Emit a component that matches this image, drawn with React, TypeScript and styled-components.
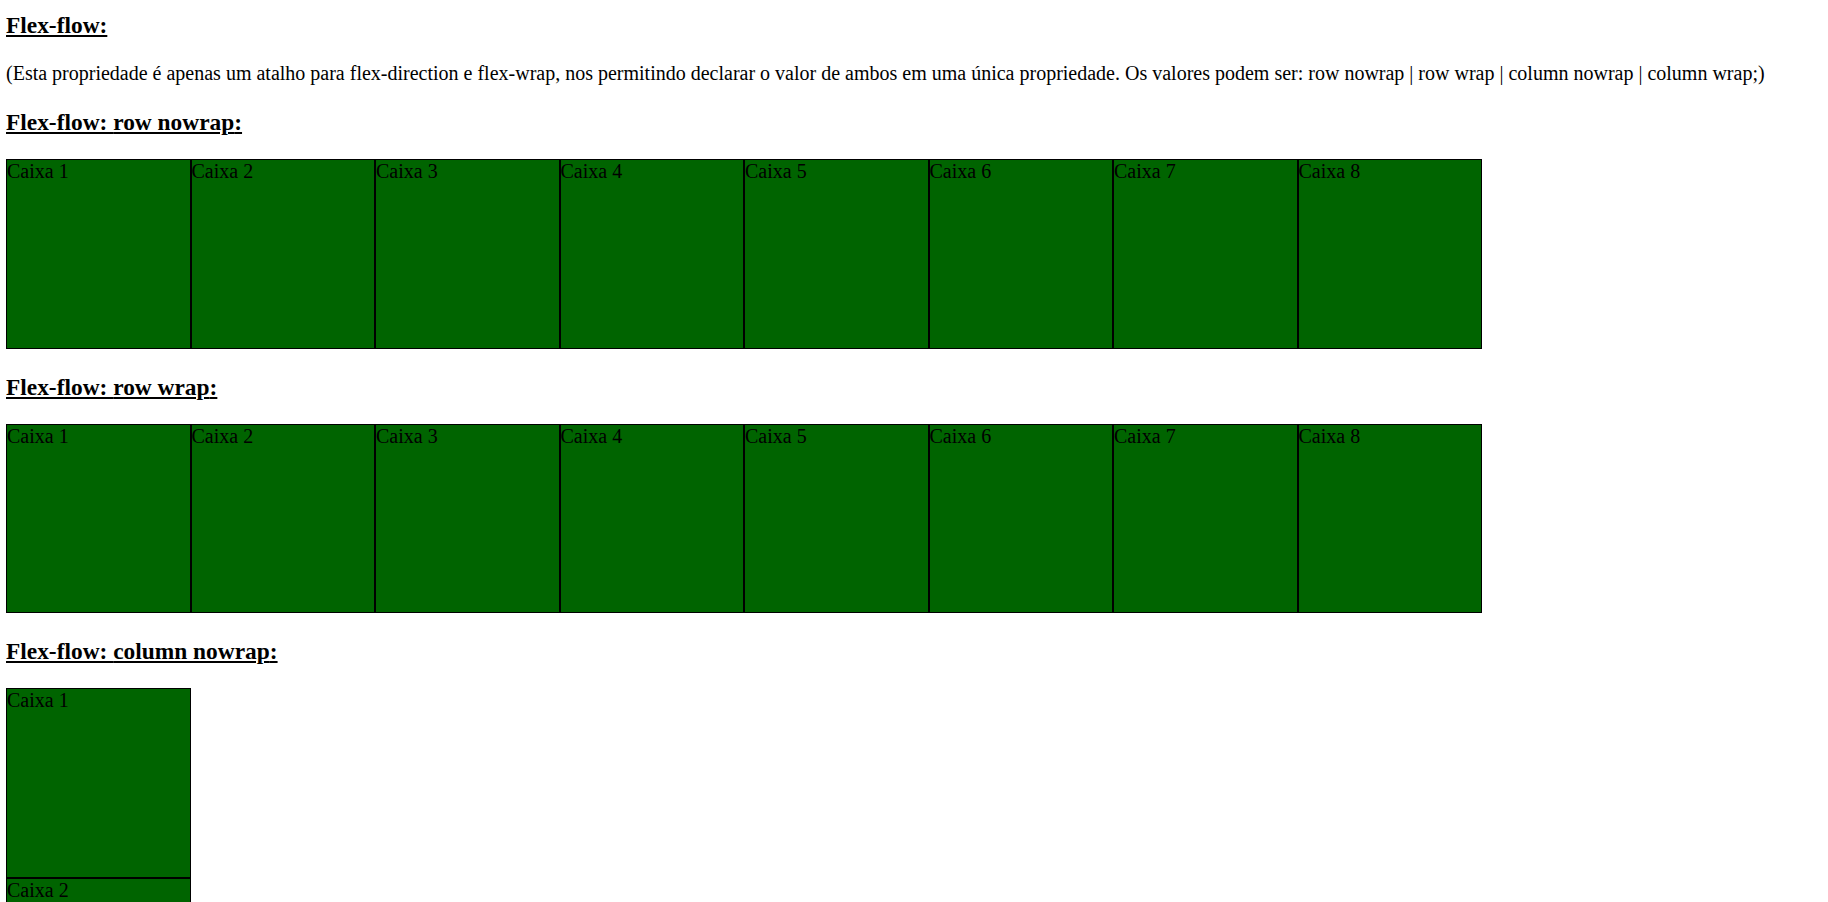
import React from "react";
import styled, { createGlobalStyle } from "styled-components";

const GlobalStyle = createGlobalStyle`
  html, body {
    margin: 0;
    padding: 0;
    background: #ffffff;
  }
  body {
    font-family: "Liberation Serif", "Times New Roman", serif;
    color: #000000;
  }
`;

const Page = styled.main`
  display: flex;
  flex-direction: column;
  align-items: flex-start;
  padding: 12px 0 0 6px;
`;

const Heading = styled.h3`
  margin: 0 0 23px;
  font-size: 23.4px;
  line-height: 27px;
  font-weight: bold;
  text-decoration: underline;
`;

const Intro = styled.p`
  margin: 0 0 24px;
  font-size: 20px;
  line-height: 23px;
  white-space: nowrap;
`;

const Flow = styled.div<{ $flow: string }>`
  display: flex;
  flex-flow: ${(p) => p.$flow};
  width: 1476px;
  margin-bottom: 25px;
`;

const Box = styled.div`
  flex: 0 0 auto;
  box-sizing: border-box;
  width: 184.5px;
  height: 189.5px;
  background: #006400;
  border: 1px solid #000000;
  font-size: 20px;
  line-height: normal;
`;

const sections = [
  "row nowrap",
  "row wrap",
  "column nowrap",
  "column wrap",
];

const boxes = [1, 2, 3, 4, 5, 6, 7, 8];

export default function App() {
  return (
    <>
      <GlobalStyle />
      <Page>
        <Heading>Flex-flow:</Heading>
        <Intro>
          (Esta propriedade é apenas um atalho para flex-direction e flex-wrap, nos permitindo declarar o valor de
          ambos em uma única propriedade. Os valores podem ser: row nowrap | row wrap | column nowrap | column wrap;)
        </Intro>
        {sections.map((flow) => (
          <React.Fragment key={flow}>
            <Heading>Flex-flow: {flow}:</Heading>
            <Flow $flow={flow}>
              {boxes.map((n) => (
                <Box key={n}>Caixa {n}</Box>
              ))}
            </Flow>
          </React.Fragment>
        ))}
      </Page>
    </>
  );
}
